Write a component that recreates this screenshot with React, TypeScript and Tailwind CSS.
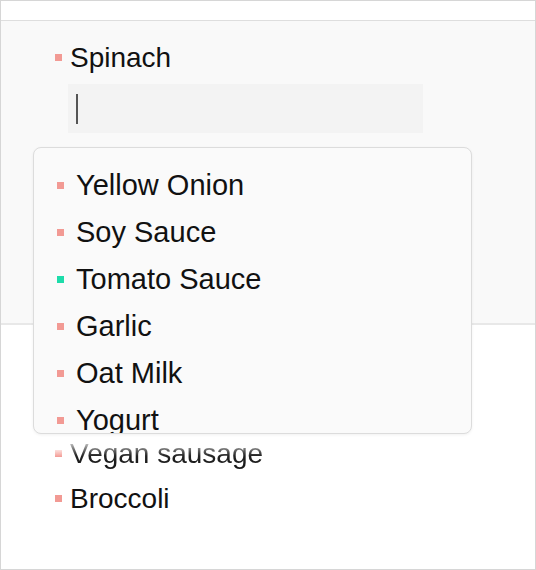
import React from "react";

const PINK = "bg-[#f29a94]";
const TEAL = "bg-[#1ddcaa]";

const options = [
  { name: "Yellow Onion", color: PINK },
  { name: "Soy Sauce", color: PINK },
  { name: "Tomato Sauce", color: TEAL },
  { name: "Garlic", color: PINK },
  { name: "Oat Milk", color: PINK },
  { name: "Yogurt", color: PINK },
];

export default function App() {
  return (
    <div
      className="relative w-[536px] h-[570px] overflow-hidden border border-[#d6d6d6] bg-white text-[28px] text-[#111]"
      style={{ fontFamily: '"Liberation Sans", Arial, sans-serif' }}
    >
      {/* top bar */}
      <div className="h-[20px] border-b border-[#dedede]" />

      {/* editing section */}
      <div className="h-[304px] border-b-2 border-[#e8e8e8] bg-[#f9f9f9] pt-[13px] pl-[54px]">
        <div className="flex h-[47px] items-center gap-2">
          <span className={`h-[7px] w-[7px] ${PINK}`} />
          <span>Spinach</span>
        </div>
        <div className="mt-[3px] ml-[13px] flex h-[49px] w-[355px] items-center bg-[#f3f3f3] pl-[8px]">
          <div className="h-[30px] w-[2px] bg-[#555]" />
        </div>
      </div>

      {/* remaining list */}
      <div className="pt-[106px] pl-[54px]">
        <div className="flex h-[45px] items-center gap-2">
          <span className="h-[7px] w-[7px] bg-gradient-to-b from-[#fbe1df] to-[#f29a94]" />
          <span className="bg-gradient-to-b from-[#e0e0e0] from-20% via-[#222] via-55% to-[#111] bg-clip-text text-transparent">
            Vegan sausage
          </span>
        </div>
        <div className="flex h-[45px] items-center gap-2">
          <span className={`h-[7px] w-[7px] ${PINK}`} />
          <span>Broccoli</span>
        </div>
      </div>

      {/* dropdown */}
      <div className="absolute left-[32px] top-[146px] h-[287px] w-[439px] overflow-hidden rounded-[8px] border border-[#dcdcdc] bg-[#fafafa] pt-[14px] pl-[23px] text-[29px] shadow-[0_1px_3px_rgba(0,0,0,0.06)]">
        {options.map((o) => (
          <div key={o.name} className="flex h-[47px] items-center gap-3">
            <span className={`h-[7px] w-[7px] ${o.color}`} />
            <span>{o.name}</span>
          </div>
        ))}
      </div>
    </div>
  );
}
